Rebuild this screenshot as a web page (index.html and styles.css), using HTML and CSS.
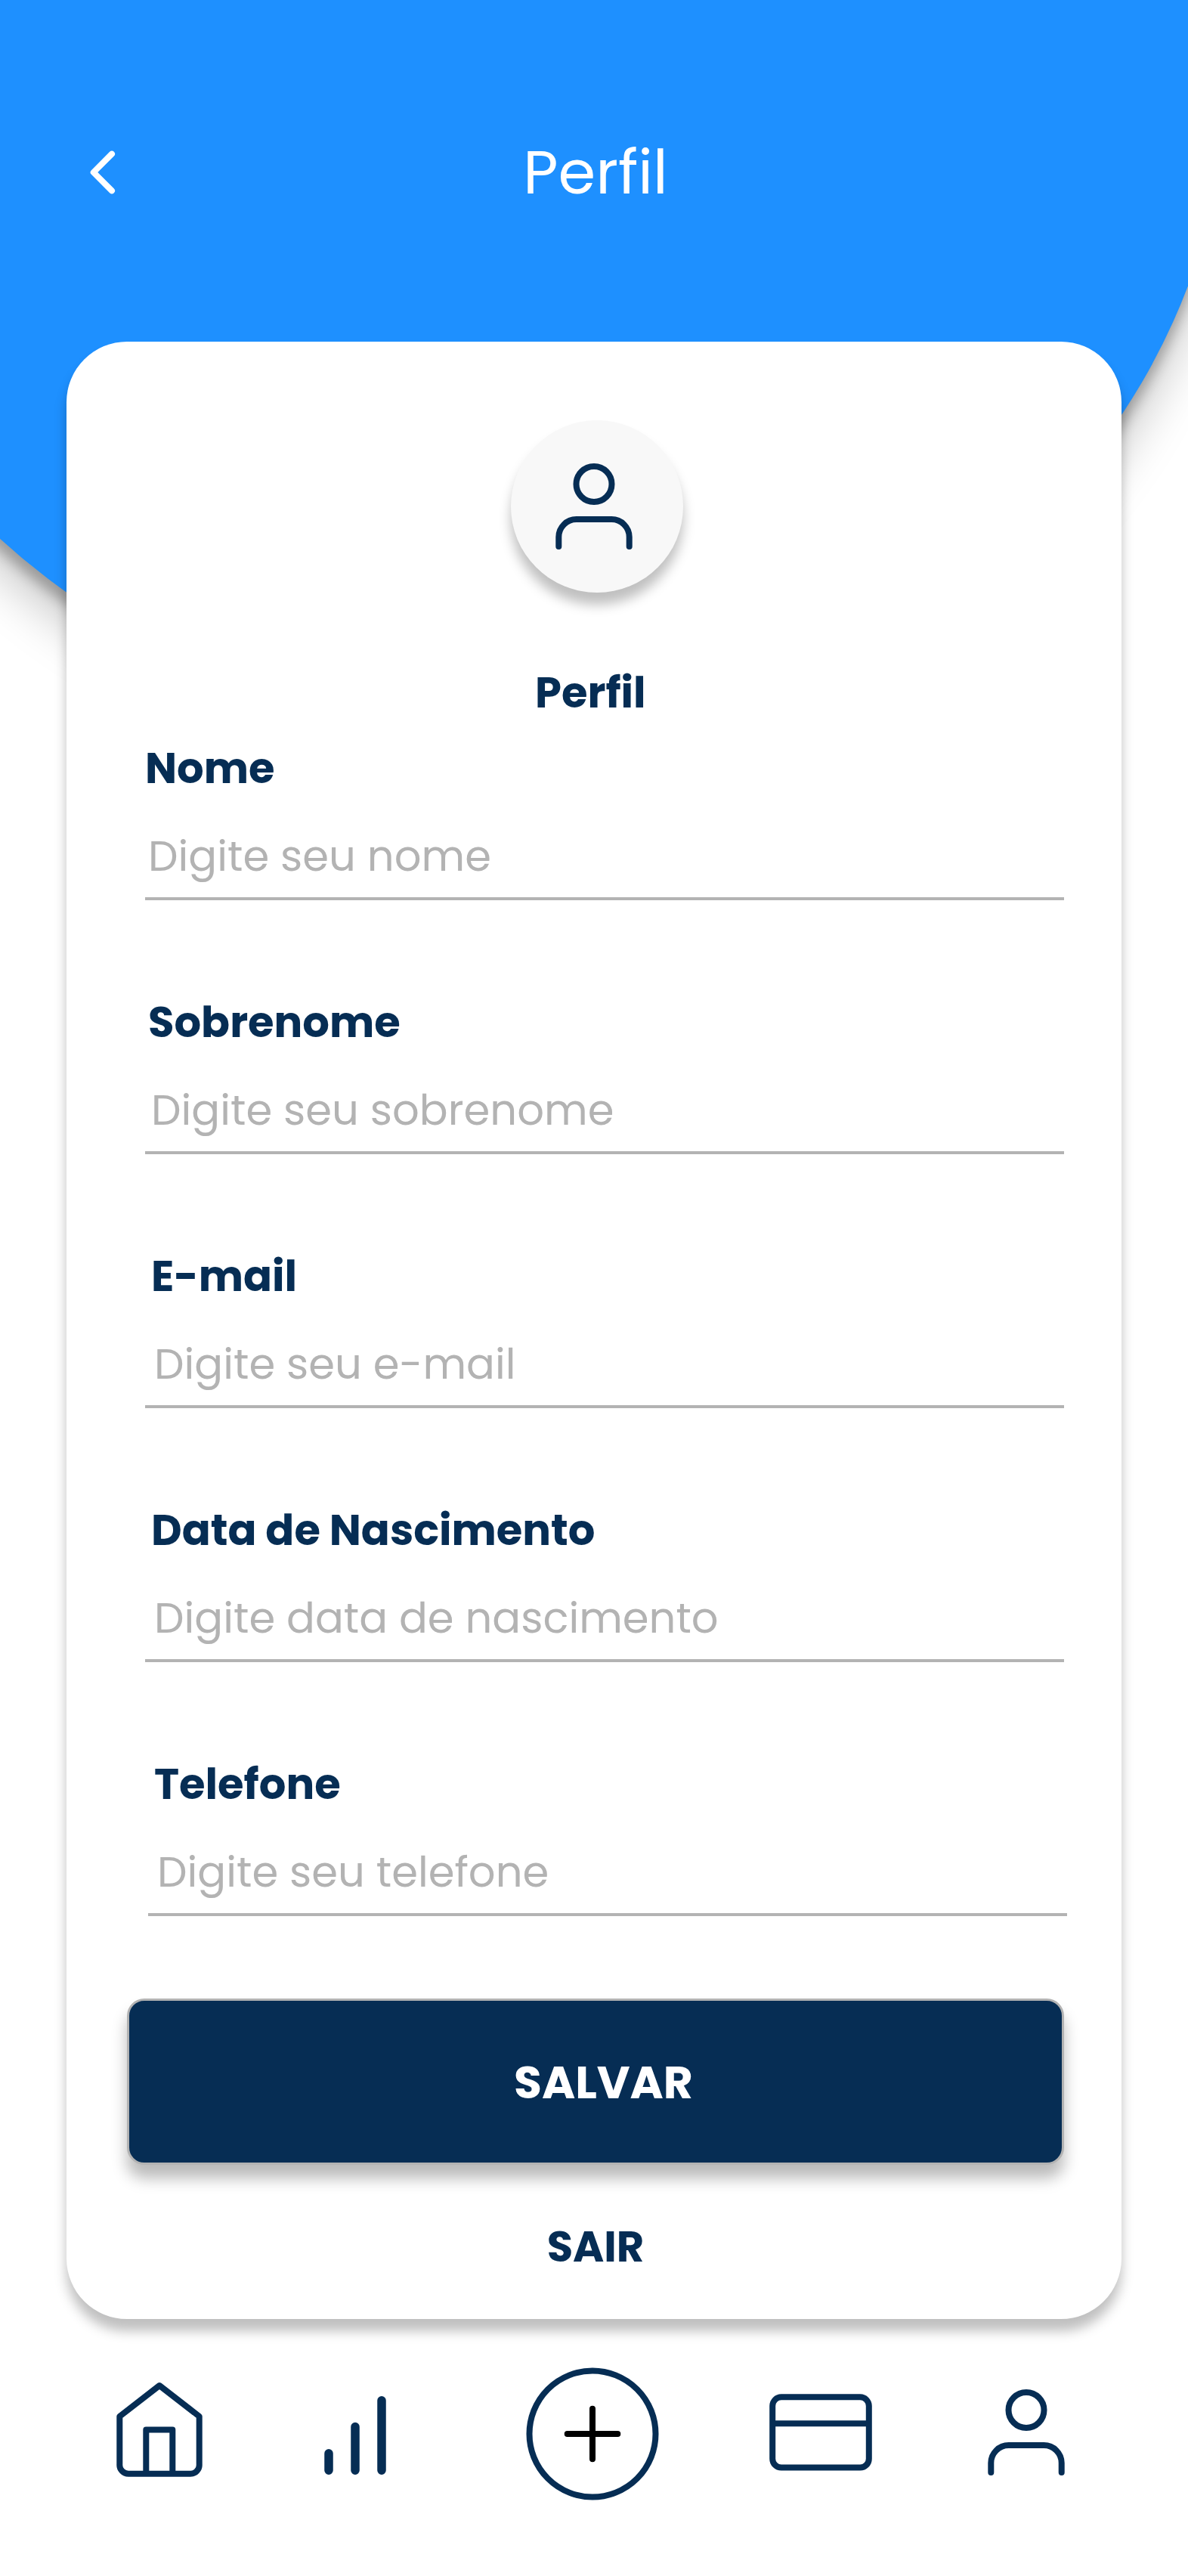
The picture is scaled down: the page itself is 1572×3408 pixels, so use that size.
FILE: index.html
```html
<!DOCTYPE html>
<html lang="pt-BR">
<head>
<meta charset="utf-8">
<title>Perfil</title>
<link rel="stylesheet" href="styles.css">
</head>
<body>
<div class="screen">
  <div class="backdrop"></div>

  <header class="topbar">
    <svg class="back" viewBox="0 0 36 64" fill="none" stroke="#fff" stroke-width="8" stroke-linecap="round" stroke-linejoin="round"><path d="M30 7.7 5.7 32 30 56.3"/></svg>
    <h1 class="title">Perfil</h1>
  </header>

  <main class="card">
    <div class="avatar">
      <svg class="icon-user" viewBox="0 0 102 114" fill="none" stroke="#062d54" stroke-width="8" stroke-linecap="round"><circle cx="51" cy="27.5" r="23.5"/><path d="M4.3 110V97.5A23.4 23.4 0 0 1 27.7 74.1H74.3A23.4 23.4 0 0 1 97.7 97.5V110"/></svg>
    </div>
    <h2 class="heading">Perfil</h2>

    <form class="form">
      <div class="field">
        <span class="label">Nome</span>
        <span class="hint">Digite seu nome</span>
      </div>
      <div class="field field-sobrenome">
        <span class="label">Sobrenome</span>
        <span class="hint">Digite seu sobrenome</span>
      </div>
      <div class="field field-email">
        <span class="label">E-mail</span>
        <span class="hint">Digite seu e-mail</span>
      </div>
      <div class="field field-data">
        <span class="label">Data de Nascimento</span>
        <span class="hint">Digite data de nascimento</span>
      </div>
      <div class="field field-telefone">
        <span class="label">Telefone</span>
        <span class="hint">Digite seu telefone</span>
      </div>
    </form>

    <div class="save">SALVAR</div>
    <div class="exit">SAIR</div>
  </main>

  <nav class="tabs">
    <svg class="tab-home" viewBox="0 0 114 126" fill="none" stroke="#062d54" stroke-width="8" stroke-linecap="round" stroke-linejoin="round"><path d="M57 5 4.3 45.8V109.3A11.7 11.7 0 0 0 16 121.8H98A11.7 11.7 0 0 0 109.7 109.3V45.8ZM39.3 121V63.4H74.3V121"/></svg>
    <svg class="tab-stats" viewBox="0 0 82 106" fill="none" stroke="#062d54" stroke-width="11.5" stroke-linecap="round"><path d="M6 75.7V98.3M41 40.5V98.3M76 5.8V98.3"/></svg>
    <svg class="tab-add" viewBox="0 0 176 176" fill="none" stroke-width="8" stroke-linecap="round"><circle cx="88" cy="88" r="83.5" stroke="#062d54"/><path d="M54.7 88H121.3M88 54.7V121.3" stroke="#000"/></svg>
    <svg class="tab-card" viewBox="0 0 136 102" fill="none" stroke="#062d54" stroke-width="8"><rect x="4.2" y="4.3" width="127.6" height="93.3" rx="11.7"/><path d="M4 39.3H132"/></svg>
    <svg class="tab-user" viewBox="0 0 102 114" fill="none" stroke="#062d54" stroke-width="8" stroke-linecap="round"><circle cx="51" cy="27.5" r="23.5"/><path d="M4.3 110V97.5A23.4 23.4 0 0 1 27.7 74.1H74.3A23.4 23.4 0 0 1 97.7 97.5V110"/></svg>
  </nav>
</div>
</body>
</html>
```
FILE: styles.css
```css
* { box-sizing: border-box; }
body { margin: 0; background: #fff; }
h1, h2 { margin: 0; }
svg { display: block; }

.screen {
  position: relative;
  width: 1572px;
  height: 3408px;
  overflow: hidden;
  font-family: Poppins, Inter, sans-serif;
  color: #062d54;
}

/* oversized ellipse bleeding off the top and sides */
.backdrop {
  position: absolute;
  left: -282px;
  top: -787px;
  width: 1907px;
  height: 1754px;
  border-radius: 50%;
  background: #1e90ff;
  box-shadow: 0 16px 16px rgba(0, 0, 0, .25), 0 40px 64px rgba(0, 0, 0, .22);
}

.topbar {
  position: relative;
  display: flex;
  align-items: center;
  height: 452px;
  padding: 4px 0 0 118px;
}
.back { width: 36px; height: 64px; }
.title {
  width: 1268px;
  color: #fff;
  font-size: 80px;
  font-weight: 400;
  line-height: 100px;
  text-align: center;
}

.card {
  position: relative;
  width: 1396px;
  height: 2616px;
  margin-left: 88px;
  padding: 104px 76px 0 80px;
  border-radius: 80px;
  background: #fff;
  box-shadow: 0 16px 16px rgba(0, 0, 0, .25);
}

.avatar {
  width: 228px;
  height: 228px;
  margin-left: 508px;
  padding: 57px 0 0 59px;
  border-radius: 50%;
  background: #f8f8f8;
  box-shadow: 0 16px 16px rgba(0, 0, 0, .25);
}
.icon-user { width: 102px; height: 114px; }

.heading {
  margin-top: 103px;
  padding-left: 540px;
  font-size: 56px;
  font-weight: 700;
  line-height: 60px;
}

.form {
  display: flex;
  flex-direction: column;
  gap: 132px;
  margin-top: 40px;
  padding-left: 24px;
}
.field {
  display: flex;
  flex-direction: column;
  gap: 56px;
  width: 1216px;
  height: 204px;
  border-bottom: 4px solid #b3b3b3;
  font-size: 56px;
  line-height: 60px;
  white-space: nowrap;
}
.label { font-weight: 700; }
.hint { padding-left: 4px; color: #b3b3b3; }

.field-sobrenome { padding-left: 4px; }
.field-email, .field-data { padding-left: 8px; }
.field-telefone { margin-left: 4px; padding-left: 8px; }

.save {
  display: flex;
  align-items: center;
  justify-content: center;
  height: 220px;
  margin-top: 109px;
  padding: 1px 0 0 21px;
  border: 3px solid #b3b3b3;
  border-radius: 23px;
  background: #062d54;
  box-shadow: 0 18px 20px rgba(0, 0, 0, .27);
  color: #fff;
  font-size: 60px;
  font-weight: 700;
}
.exit {
  margin-top: 79px;
  font-size: 56px;
  font-weight: 700;
  line-height: 60px;
  text-align: center;
}

.tabs {
  display: flex;
  align-items: center;
  height: 176px;
  margin-top: 64px;
  padding-left: 154px;
}
.tab-home { width: 114px; height: 126px; margin-top: -13px; }
.tab-stats { width: 82px; height: 106px; margin: 5px 0 0 161px; }
.tab-add { width: 176px; height: 176px; margin-left: 185px; }
.tab-card { width: 136px; height: 102px; margin: -4px 0 0 146px; }
.tab-user { width: 102px; height: 114px; margin: -4px 0 0 153px; }
```
